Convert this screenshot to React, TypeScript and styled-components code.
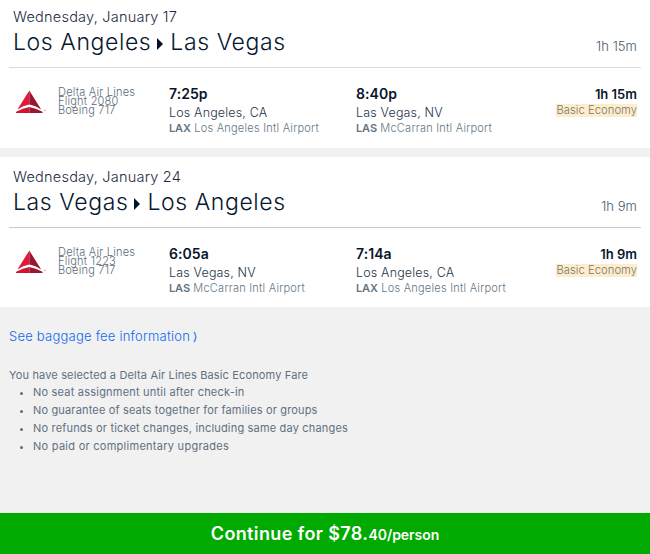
import React from "react";
import styled, { createGlobalStyle } from "styled-components";

const GlobalStyle = createGlobalStyle`
  * { box-sizing: border-box; }
  body {
    margin: 0;
    background: #f1f1f1;
    font-family: Inter, "Liberation Sans", sans-serif;
    color: #0a1a33;
  }
`;

const Page = styled.main`
  display: flex;
  flex-direction: column;
  width: 650px;
  height: 554px;
  overflow: hidden;
  background: #f1f1f2;
`;

const LegCard = styled.section<{ $first?: boolean }>`
  flex: none;
  height: ${(p) => (p.$first ? 148 : 150)}px;
  margin-bottom: ${(p) => (p.$first ? 9 : 0)}px;
  padding: ${(p) => (p.$first ? 8 : 11)}px 9px 0;
  background: #fff;
`;

const LegHeader = styled.header<{ $line: string }>`
  display: flex;
  justify-content: space-between;
  align-items: flex-end;
  height: 60px;
  padding: 0 4px;
  border-bottom: 1px solid ${(p) => p.$line};
`;

const Titles = styled.div`
  height: 100%;
`;

const DateText = styled.div`
  height: 20px;
  font-size: 14.5px;
  line-height: 18px;
  font-weight: 350;
  letter-spacing: 0.22px;
  color: #1d2b42;
`;

const Route = styled.h1`
  display: flex;
  align-items: center;
  margin: 0;
  font-size: 23px;
  line-height: 28px;
  font-weight: 300;
  letter-spacing: 0.6px;
  color: #08182f;
`;

const RouteArrow = styled.svg`
  flex: none;
  width: 6px;
  height: 12px;
  margin: 4px 7px 0 6px;
`;

const TotalTime = styled.div`
  height: 30px;
  font-size: 13px;
  line-height: 18px;
  letter-spacing: 0.05px;
  font-weight: 350;
  color: #4a5a6c;
`;

const Details = styled.div`
  display: grid;
  grid-template-columns: 45px 111px 187px 1fr auto;
  padding: 17px 4px 0 4px;
`;

const Logo = styled.svg`
  width: 32px;
  height: 24px;
  margin: 5px 0 0 1px;
`;

const Carrier = styled.div`
  font-size: 11px;
  line-height: 9.4px;
  letter-spacing: 0.22px;
  font-weight: 350;
  padding-top: 2.5px;
  color: #5c6c7a;
`;

const Stop = styled.div`
  white-space: nowrap;
`;

const Time = styled.div`
  height: 19px;
  font-size: 14px;
  line-height: 17px;
  font-weight: 600;
  letter-spacing: 0.06px;
  color: #08162c;
`;

const City = styled.div`
  height: 17px;
  font-size: 12.5px;
  line-height: 18px;
  font-weight: 350;
  letter-spacing: 0.16px;
  color: #26364a;
`;

const Airport = styled.div`
  font-size: 11px;
  line-height: 14px;
  letter-spacing: 0.24px;
  font-weight: 350;
  color: #647685;

  b {
    font-weight: 600;
    letter-spacing: -0.1px;
  }
`;

const Fare = styled.div`
  display: flex;
  flex-direction: column;
  align-items: flex-end;
`;

const Duration = styled.div`
  height: 19px;
  font-size: 13px;
  line-height: 18px;
  font-weight: 600;
  letter-spacing: 0;
  color: #08162c;
`;

const Cabin = styled.span`
  height: 13px;
  font-size: 11.2px;
  line-height: 13px;
  letter-spacing: 0.06px;
  font-weight: 350;
  color: #71796f;
  background: #ffecca;
`;

const Notes = styled.section`
  flex: 1;
  padding: 20px 9px 0;
`;

const BaggageLink = styled.a`
  display: flex;
  align-items: center;
  height: 18px;
  font-size: 13px;
  line-height: 18px;
  font-weight: 350;
  letter-spacing: 0.23px;
  color: #0f68ee;
  text-decoration: none;
`;

const Chevron = styled.svg`
  width: 5px;
  height: 12px;
  margin: 2px 0 0 3px;
`;

const Policy = styled.div`
  margin-top: 21px;
  font-size: 11px;
  line-height: 18px;
  font-weight: 370;
  color: #5f707e;
`;

const PolicyTitle = styled.p`
  height: 17px;
  margin: 0;
  letter-spacing: 0.15px;
`;

const PolicyList = styled.ul`
  list-style: none;
  margin: 0;
  padding: 0 0 0 11px;
`;

const PolicyItem = styled.li<{ $spacing: number }>`
  display: flex;
  align-items: center;
  letter-spacing: ${(p) => p.$spacing}px;

  &::before {
    content: "";
    width: 3px;
    height: 3px;
    margin: 3px 10px 0 0;
    border-radius: 50%;
    background: #5b6c7a;
  }
`;

const ContinueButton = styled.button`
  display: flex;
  flex: none;
  justify-content: center;
  align-items: baseline;
  height: 41px;
  padding: 9px 0 0;
  border: 0;
  background: #00aa00;
  color: #fff;
  font-family: inherit;
  font-size: 18px;
  line-height: 24px;
  font-weight: 600;
  letter-spacing: 0.37px;
  white-space: pre;
`;

const Cents = styled.span`
  font-size: 14px;
  letter-spacing: -0.05px;
`;

type Place = { time: string; city: string; code: string; airport: string };

type Leg = {
  date: string;
  from: string;
  to: string;
  duration: string;
  flight: string;
  depart: Place;
  arrive: Place;
};

const legs: Leg[] = [
  {
    date: "Wednesday, January 17",
    from: "Los Angeles",
    to: "Las Vegas",
    duration: "1h 15m",
    flight: "Flight 2080",
    depart: { time: "7:25p", city: "Los Angeles, CA", code: "LAX", airport: "Los Angeles Intl Airport" },
    arrive: { time: "8:40p", city: "Las Vegas, NV", code: "LAS", airport: "McCarran Intl Airport" },
  },
  {
    date: "Wednesday, January 24",
    from: "Las Vegas",
    to: "Los Angeles",
    duration: "1h 9m",
    flight: "Flight 1223",
    depart: { time: "6:05a", city: "Las Vegas, NV", code: "LAS", airport: "McCarran Intl Airport" },
    arrive: { time: "7:14a", city: "Los Angeles, CA", code: "LAX", airport: "Los Angeles Intl Airport" },
  },
];

const rules = [
  { text: "No seat assignment until after check-in", spacing: 0.21 },
  { text: "No guarantee of seats together for families or groups", spacing: 0.16 },
  { text: "No refunds or ticket changes, including same day changes", spacing: 0.18 },
  { text: "No paid or complimentary upgrades", spacing: 0.27 },
];

const DeltaLogo = () => (
  <Logo viewBox="0 0 32 24" aria-hidden="true">
    <path d="M15.3 0.5 V14.6 Q9 15.6 3.4 19.6 Z" fill="#e31837" />
    <path d="M15.3 0.5 L27.2 19.6 Q21.6 15.6 15.3 14.6 Z" fill="#9b1631" />
    <path d="M15.3 17 V22.9 H1.8 L2.6 21.6 Q9 18 15.3 17 Z" fill="#d0142f" />
    <path d="M15.3 17 Q21.6 18 28 21.6 L28.8 22.9 H15.3 Z" fill="#9b1631" />
    <circle cx="31" cy="20.4" r="0.8" fill="#e2a0aa" />
  </Logo>
);

const StopInfo = ({ place }: { place: Place }) => (
  <Stop>
    <Time>{place.time}</Time>
    <City>{place.city}</City>
    <Airport>
      <b>{place.code}</b> {place.airport}
    </Airport>
  </Stop>
);

const LegView = ({ leg, first }: { leg: Leg; first: boolean }) => (
  <LegCard $first={first}>
    <LegHeader $line={first ? "#d8d9e3" : "#c9cacc"}>
      <Titles>
        <DateText>{leg.date}</DateText>
        <Route>
          {leg.from}
          <RouteArrow viewBox="0 0 6 12" aria-hidden="true">
            <path d="M0 0 L6 6 L0 12 Z" fill="#06122b" />
          </RouteArrow>
          {leg.to}
        </Route>
      </Titles>
      <TotalTime>{leg.duration}</TotalTime>
    </LegHeader>
    <Details>
      <DeltaLogo />
      <Carrier>
        <div>Delta Air Lines</div>
        <div>{leg.flight}</div>
        <div>Boeing 717</div>
      </Carrier>
      <StopInfo place={leg.depart} />
      <StopInfo place={leg.arrive} />
      <Fare>
        <Duration>{leg.duration}</Duration>
        <Cabin>Basic Economy</Cabin>
      </Fare>
    </Details>
  </LegCard>
);

export default function App() {
  return (
    <>
      <GlobalStyle />
      <Page>
        {legs.map((leg, i) => (
          <LegView key={leg.date} leg={leg} first={i === 0} />
        ))}
        <Notes>
          <BaggageLink href="#">
            See baggage fee information
            <Chevron viewBox="0 0 5 12" aria-hidden="true">
              <path d="M1 1 Q4.6 6 1 11" fill="none" stroke="#5a8cff" strokeWidth="1.5" />
            </Chevron>
          </BaggageLink>
          <Policy>
            <PolicyTitle>You have selected a Delta Air Lines Basic Economy Fare</PolicyTitle>
            <PolicyList>
              {rules.map((r) => (
                <PolicyItem key={r.text} $spacing={r.spacing}>
                  {r.text}
                </PolicyItem>
              ))}
            </PolicyList>
          </Policy>
        </Notes>
        <ContinueButton>
          Continue for $78.<Cents>40/person</Cents>
        </ContinueButton>
      </Page>
    </>
  );
}
